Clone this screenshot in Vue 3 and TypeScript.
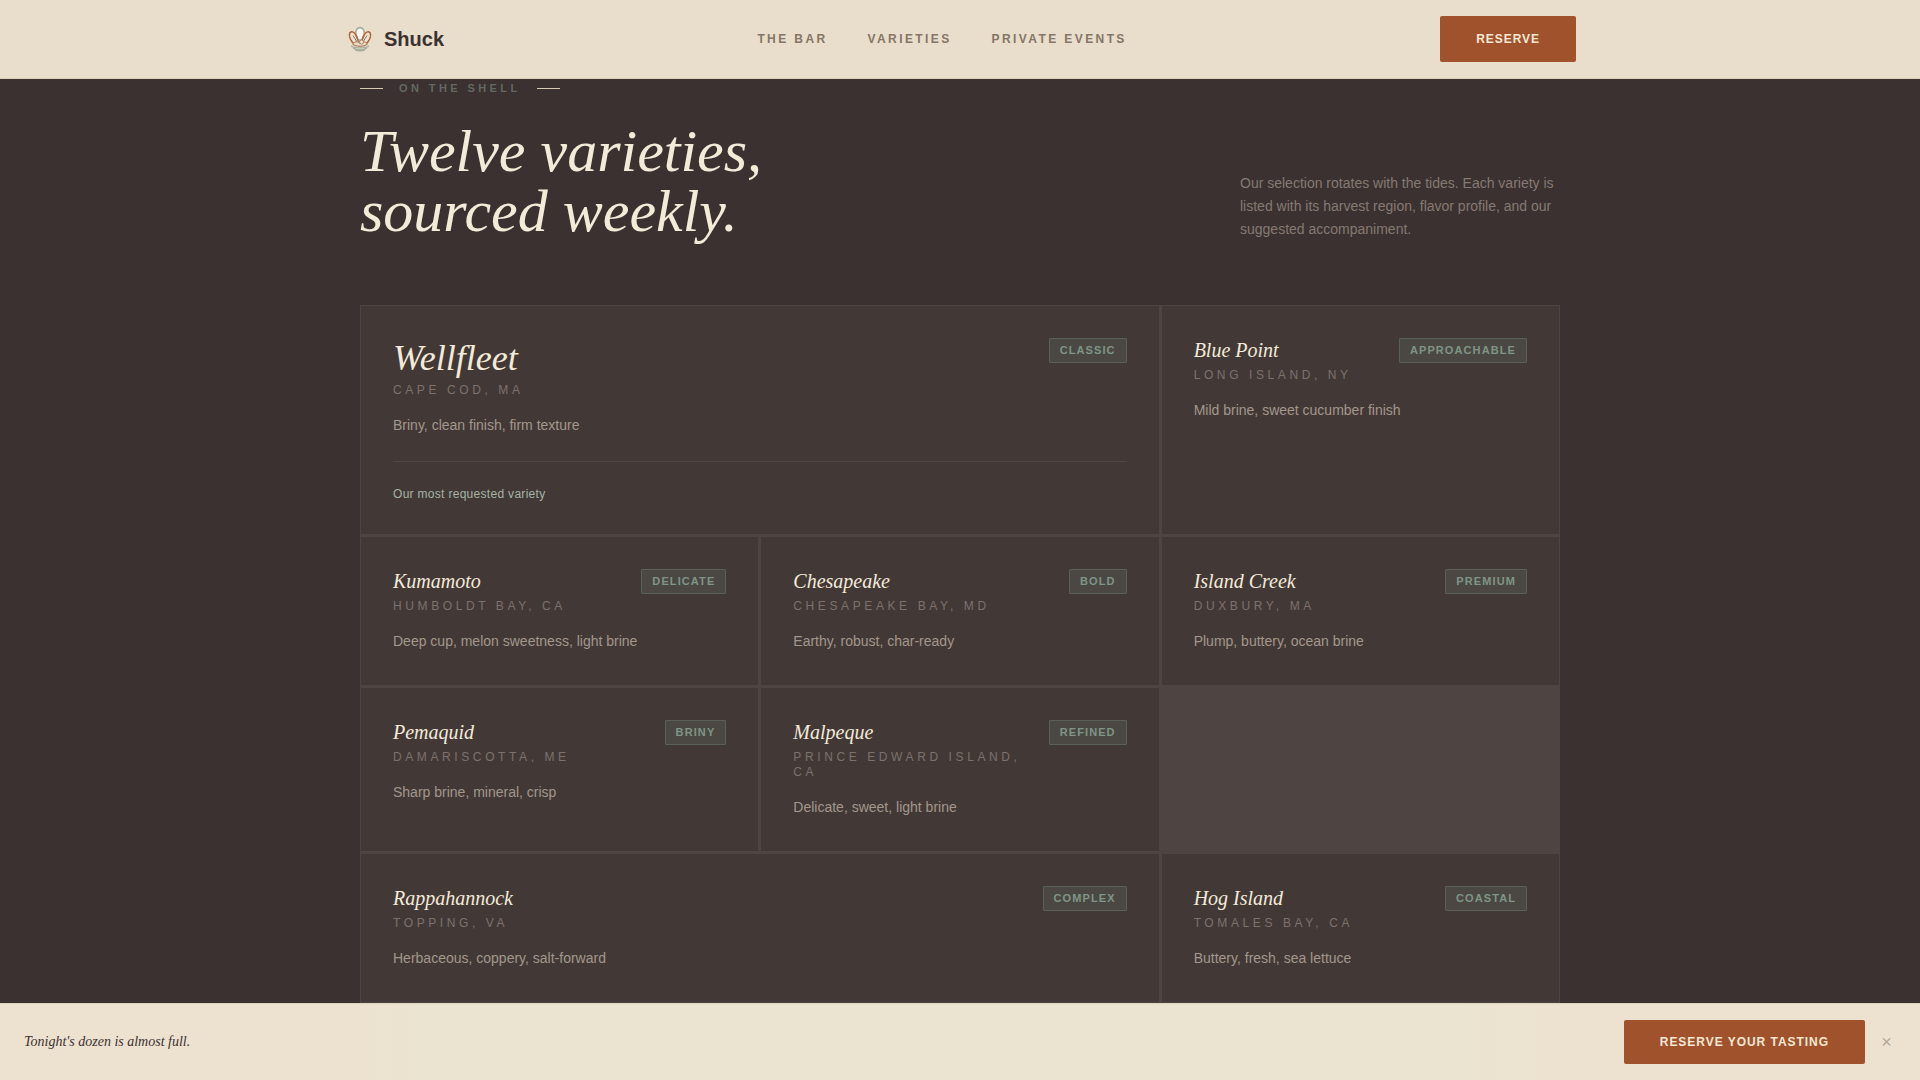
<script setup lang="ts">
import { ref } from 'vue'

interface Variety {
  name: string
  region: string
  profile: string
  badge: string
  wide?: boolean
  note?: string
}

const links = ['The Bar', 'Varieties', 'Private Events']

const varieties: Variety[] = [
  { name: 'Wellfleet', region: 'Cape Cod, MA', profile: 'Briny, clean finish, firm texture', badge: 'Classic', wide: true, note: 'Our most requested variety' },
  { name: 'Blue Point', region: 'Long Island, NY', profile: 'Mild brine, sweet cucumber finish', badge: 'Approachable' },
  { name: 'Kumamoto', region: 'Humboldt Bay, CA', profile: 'Deep cup, melon sweetness, light brine', badge: 'Delicate' },
  { name: 'Chesapeake', region: 'Chesapeake Bay, MD', profile: 'Earthy, robust, char-ready', badge: 'Bold' },
  { name: 'Island Creek', region: 'Duxbury, MA', profile: 'Plump, buttery, ocean brine', badge: 'Premium' },
  { name: 'Pemaquid', region: 'Damariscotta, ME', profile: 'Sharp brine, mineral, crisp', badge: 'Briny' },
  { name: 'Malpeque', region: 'Prince Edward Island, CA', profile: 'Delicate, sweet, light brine', badge: 'Refined' },
  { name: 'Rappahannock', region: 'Topping, VA', profile: 'Herbaceous, coppery, salt-forward', badge: 'Complex', wide: true },
  { name: 'Hog Island', region: 'Tomales Bay, CA', profile: 'Buttery, fresh, sea lettuce', badge: 'Coastal' },
]

const bannerOpen = ref(true)
</script>

<template>
  <div class="page">
    <header class="topbar">
      <div class="topbar-inner">
        <a class="brand" href="#">
          <svg class="brand-mark" viewBox="0 0 32 32" fill="none" aria-hidden="true">
            <path d="M7 23c4 2.500 14 2.500 18 0M9 25c4 2.500 10 2.500 14 0M11 27c3 1 7 1 10 0" stroke="#a3ae9d" stroke-width="1.200" />
            <path d="M16 4.500c-3 .6-4.600 3.200-4.200 6.500l2.200 6h4l2.200-6c.4-3.300-1.200-5.900-4.200-6.500z" fill="#faf5ec" stroke="#a0ab99" stroke-width="1.500" />
            <path d="M12 22C7 20 4.300 13 6 9.500c2.800-2.500 6.500 1 8 8" fill="#efe3d2" stroke="#ad6239" stroke-width="1.400" />
            <path d="M20 22c5-2 7.700-9 6-12.500-2.800-2.500-6.500 1-8 8" fill="#efe3d2" stroke="#ad6239" stroke-width="1.400" />
            <path d="M9 12.500l4 6.500M23 12.500l-4 6.500M12 13l3 6M20 13l-3 6" stroke="#8b7465" stroke-width="1" />
            <path d="M8.500 21c3-3 5-3 7.500-.5 2.500-2.500 4.500-2.500 7.500.5-3 3-12 3-15 0z" fill="#ead6c2" stroke="#a5704f" stroke-width="1" />
            <circle cx="17.500" cy="19" r="2" fill="#f3e5d4" stroke="#b07b5a" stroke-width=".9" />
          </svg>
          <span>Shuck</span>
        </a>
        <nav class="links" aria-label="Main">
          <a v-for="link in links" :key="link" href="#">{{ link }}</a>
        </nav>
        <button class="cta cta-top" type="button">Reserve</button>
      </div>
    </header>

    <main class="section">
      <div class="intro">
        <div>
          <p class="eyebrow"><span>On the shell</span></p>
          <h2>Twelve varieties,<br />sourced weekly.</h2>
        </div>
        <p class="lede">
          Our selection rotates with the tides. Each variety is listed with its harvest region, flavor profile, and our suggested accompaniment.
        </p>
      </div>

      <div class="grid">
        <article v-for="v in varieties" :key="v.name" class="card" :class="{ wide: v.wide, featured: v.note }">
          <div class="card-head">
            <div>
              <h3>{{ v.name }}</h3>
              <p class="region">{{ v.region }}</p>
            </div>
            <span class="badge">{{ v.badge }}</span>
          </div>
          <p class="profile">{{ v.profile }}</p>
          <p v-if="v.note" class="note">{{ v.note }}</p>
        </article>
      </div>
    </main>

    <aside v-if="bannerOpen" class="banner">
      <p>Tonight's dozen is almost full.</p>
      <div class="banner-actions">
        <button class="cta cta-banner" type="button">Reserve your tasting</button>
        <button class="close" type="button" aria-label="Dismiss" @click="bannerOpen = false">×</button>
      </div>
    </aside>
  </div>
</template>

<style>
body {
  margin: 0;
  background: #3b3130;
}
</style>

<style scoped>
.page {
  min-height: 100vh;
  display: flex;
  flex-direction: column;
  background: #3b3130;
  font-family: "Liberation Sans", Arial, sans-serif;
}

p,
h2,
h3 {
  margin: 0;
}

.topbar {
  position: sticky;
  top: 0;
  z-index: 2;
  background: #e8decb;
  border-bottom: 1px solid #ddd0b6;
}

.topbar-inner {
  max-width: 1232px;
  margin: 0 auto;
  padding: 16px 24px;
  display: flex;
  align-items: center;
  justify-content: space-between;
}

.brand {
  display: flex;
  align-items: center;
  gap: 8px;
  color: #3b3130;
  font-size: 20px;
  font-weight: 700;
  text-decoration: none;
}

.brand-mark {
  width: 32px;
  height: 32px;
}

.links {
  display: flex;
  gap: 40px;
}

.links a {
  color: #857565;
  font-size: 12px;
  font-weight: 700;
  letter-spacing: 0.2em;
  text-transform: uppercase;
  text-decoration: none;
}

.cta {
  padding: 0 36px;
  border: 0;
  border-radius: 2px;
  background: #a0522d;
  color: #f5e8d3;
  font-family: inherit;
  font-size: 12px;
  font-weight: 700;
  letter-spacing: 0.08em;
  text-transform: uppercase;
  cursor: pointer;
}

.cta-top {
  height: 46px;
}

.cta-banner {
  height: 44px;
}

.section {
  flex: 1;
  width: 100%;
  max-width: 1200px;
  margin: 0 auto;
}

.intro {
  display: flex;
  align-items: flex-end;
  justify-content: space-between;
  gap: 32px;
  margin-bottom: 64px;
}

.eyebrow {
  display: flex;
  align-items: center;
  gap: 16px;
  margin-bottom: 24px;
  color: #626963;
  font-size: 11px;
  font-weight: 700;
  line-height: 18px;
  letter-spacing: 0.31em;
  text-transform: uppercase;
}

.eyebrow::before,
.eyebrow::after {
  content: "";
  width: 23px;
  height: 1px;
  background: #d9cbb0;
}

h2 {
  color: #f4ead8;
  font-family: "Liberation Serif", "Times New Roman", serif;
  font-size: 60px;
  font-style: italic;
  font-weight: 400;
  line-height: 60px;
}

.lede {
  width: 320px;
  color: #857a72;
  font-size: 14px;
  line-height: 23px;
}

.grid {
  display: grid;
  grid-template-columns: repeat(3, 1fr);
  gap: 1px;
  background: #4e4442;
}

.card {
  padding: 32px;
  border: 1px solid #4e4543;
  background: #423937;
}

.wide {
  grid-column: span 2;
}

.card-head {
  display: flex;
  align-items: flex-start;
  justify-content: space-between;
  gap: 16px;
  margin-bottom: 15px;
}

h3 {
  margin-bottom: 6px;
  color: #f4ead8;
  font-family: "Liberation Serif", "Times New Roman", serif;
  font-size: 20px;
  font-style: italic;
  font-weight: 400;
  line-height: 24px;
}

.featured h3 {
  margin-bottom: 5px;
  font-size: 36px;
  line-height: 40px;
}

.region {
  color: #7d716b;
  font-size: 12px;
  line-height: 15px;
  letter-spacing: 0.3em;
  text-transform: uppercase;
}

.badge {
  padding: 5px 10px;
  border: 1px solid #5a5f57;
  border-radius: 1px;
  background: #4b4844;
  color: #7f9585;
  font-size: 11px;
  font-weight: 700;
  line-height: 13px;
  letter-spacing: 0.1em;
  text-transform: uppercase;
}

.profile {
  color: #a3978b;
  font-size: 14px;
  line-height: 24px;
}

.note {
  margin-top: 24px;
  padding-top: 24px;
  border-top: 1px solid #514745;
  color: #a5b3a4;
  font-size: 12px;
  line-height: 16px;
  letter-spacing: 0.025em;
}

.banner {
  position: sticky;
  bottom: 0;
  z-index: 2;
  display: flex;
  align-items: center;
  justify-content: space-between;
  padding: 16px 24px;
  border-top: 1px solid #ddd2bb;
  background: linear-gradient(90deg, #ede2d0 18%, #ebe4d0 22%, #ebe4d0 76%, #ede2d0 82%);
}

.banner p {
  color: #3b3130;
  font-family: "Liberation Serif", "Times New Roman", serif;
  font-size: 14px;
  font-style: italic;
}

.banner-actions {
  display: flex;
  align-items: center;
  gap: 12px;
}

.close {
  width: 19px;
  padding: 0;
  border: 0;
  background: none;
  color: #b3a896;
  font-family: inherit;
  font-size: 18px;
  line-height: 20px;
  cursor: pointer;
}
</style>
